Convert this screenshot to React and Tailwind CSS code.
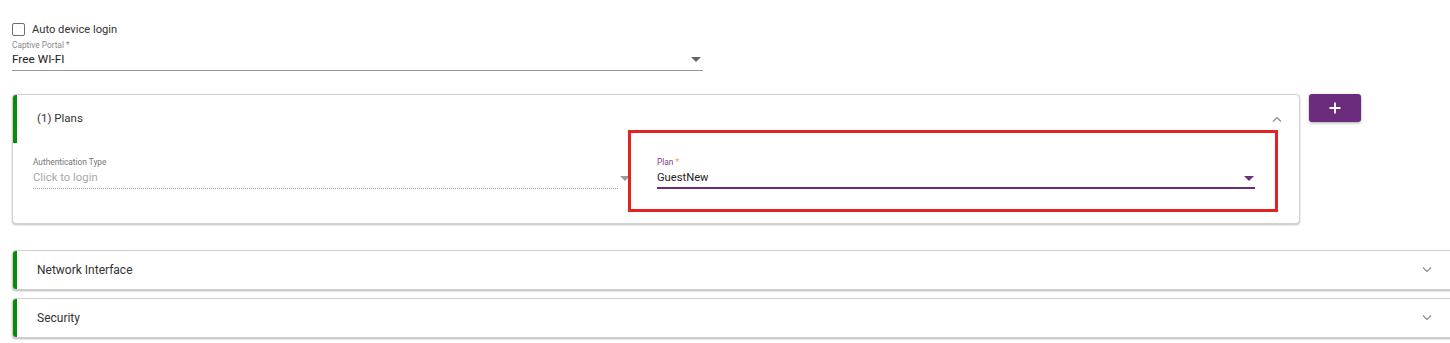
import React from "react";

const Caret = ({ color = "#666" }) => (
  <svg width="10" height="5" viewBox="0 0 10 5" className="shrink-0">
    <path d="M0 0 L10 0 L5 5 Z" fill={color} />
  </svg>
);

const Chevron = ({ up }) => (
  <svg width="10" height="6" viewBox="0 0 10 6" className="shrink-0">
    <path
      d={up ? "M1 5.5 L5 1.5 L9 5.5" : "M1 0.5 L5 4.5 L9 0.5"}
      fill="none"
      stroke="#8a8a8a"
      strokeWidth="1.2"
    />
  </svg>
);

export default function App() {
  return (
    <div
      className="w-[1450px] h-[343px] overflow-hidden bg-white text-[#333] pl-[12px] pt-[22px] relative"
      style={{ fontFamily: "Roboto, 'Liberation Sans', sans-serif" }}
    >
      {/* checkbox */}
      <div className="flex items-center h-[14px]">
        <div className="w-[13px] h-[13px] border border-[#6e6e6e] rounded-[2px]" />
        <span className="ml-[7px] text-[11.2px] leading-[14px] pt-[1px] text-[#333]">Auto device login</span>
      </div>

      {/* captive portal select */}
      <div className="w-[691px] mt-[4px]">
        <div className="text-[8.3px] leading-[10px] text-[#8a8a8a]">Captive Portal *</div>
        <div className="flex items-center justify-between h-[17px] mt-[1px] pr-[2px]">
          <span className="text-[11.8px] text-[#222]">Free WI-FI</span>
          <Caret />
        </div>
        <div className="h-[1px] bg-[#949494] mt-[2px]" />
      </div>

      {/* Plans */}
      <div className="flex items-start gap-[9px] mt-[23px]">
        <div className="w-[1288px] h-[130px] border border-[#d0d0d0] rounded-[4px] shadow-[0_1px_2px_rgba(0,0,0,0.25)] bg-white flex flex-col overflow-hidden">
          <div className="h-[48px] flex items-center border-l-[4px] border-[#0a8a0a] pl-[20px] pr-[17px] justify-between">
            <span className="text-[11.5px] text-[#333]">(1) Plans</span>
            <Chevron up />
          </div>
          <div className="flex pl-[20px] gap-[27px] pt-[14px]">
            <div className="w-[597px]">
              <div className="text-[8.3px] leading-[10px] text-[#777]">Authentication Type</div>
              <div className="flex items-center justify-between h-[17px] mt-[3px]">
                <span className="text-[11.3px] text-[#a8a8a8]">Click to login</span>
                <Caret color="#9a9a9a" />
              </div>
              <div className="border-b border-dotted border-[#9a9a9a] mt-[1px] mr-[12px]" />
            </div>
            <div className="w-[598px]">
              <div className="text-[8.3px] leading-[10px] text-[#7b3f94]">
                Plan <span className="text-[#f5a623]">*</span>
              </div>
              <div className="flex items-center justify-between h-[17px] mt-[3px] pr-[1px]">
                <span className="text-[11.2px] text-[#222]">GuestNew</span>
                <Caret color="#6b2c7e" />
              </div>
              <div className="h-[2px] bg-[#6b2c7e]" />
            </div>
          </div>
        </div>
        <button className="w-[52px] h-[28px] rounded-[3px] bg-[#6b2c7e] shadow-[0_1px_3px_rgba(0,0,0,0.35)] flex items-center justify-center">
          <svg width="12" height="12" viewBox="0 0 12 12">
            <path d="M6 0.5 V11.5 M0.5 6 H11.5" stroke="white" strokeWidth="1.8" />
          </svg>
        </button>
      </div>

      {/* red highlight annotation */}
      <div className="absolute left-[628px] top-[130px] w-[650px] h-[82px] border-[3px] border-[#e52222] pointer-events-none" />

      {/* Network Interface */}
      <div className="mt-[26px] w-[1445px] h-[40px] border border-[#d0d0d0] rounded-[4px] shadow-[0_1px_2px_rgba(0,0,0,0.3)] bg-white overflow-hidden">
        <div className="h-full flex items-center justify-between border-l-[4px] border-[#0a8a0a] pl-[20px] pr-[24px]">
          <span className="text-[12px] text-[#333]">Network Interface</span>
          <Chevron />
        </div>
      </div>

      {/* Security */}
      <div className="mt-[8px] w-[1445px] h-[40px] border border-[#d0d0d0] rounded-[4px] shadow-[0_1px_2px_rgba(0,0,0,0.3)] bg-white overflow-hidden">
        <div className="h-full flex items-center justify-between border-l-[4px] border-[#0a8a0a] pl-[20px] pr-[24px]">
          <span className="text-[12px] text-[#333]">Security</span>
          <Chevron />
        </div>
      </div>
    </div>
  );
}
